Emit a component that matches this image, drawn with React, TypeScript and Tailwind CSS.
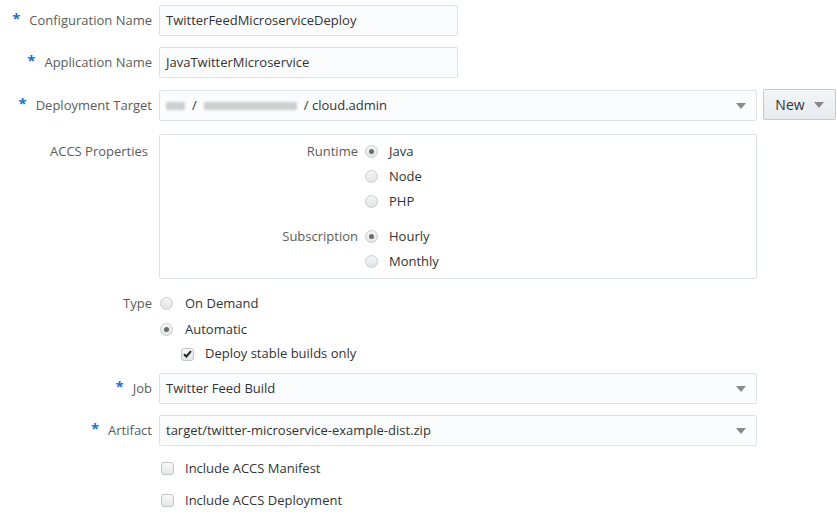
import React from 'react';

const font = { fontFamily: '"Open Sans", "Noto Sans", sans-serif' };

const Req = () => <span className="text-[#1f6fc5] text-[15px] font-bold mr-[9px] relative top-[-2px]">*</span>;

const Caret = () => (
  <svg width="10" height="6" viewBox="0 0 10 6" className="shrink-0">
    <path d="M0 0 L10 0 L5 6 Z" fill="#8a8a8a" />
  </svg>
);

const Radio = ({ checked }: { checked?: boolean }) => (
  <span className="w-[13px] h-[13px] rounded-full border border-[#c9cccf] bg-gradient-to-b from-[#f4f5f6] to-[#e2e4e6] flex items-center justify-center shrink-0">
    {checked && <span className="w-[5px] h-[5px] rounded-full bg-[#6b6b6b]" />}
  </span>
);

const Check = ({ checked }: { checked?: boolean }) => (
  <span className="w-[13px] h-[13px] rounded-[3px] border border-[#c2c5c8] bg-gradient-to-b from-[#f7f8f9] to-[#e4e6e8] flex items-center justify-center shrink-0">
    {checked && (
      <svg width="9" height="8" viewBox="0 0 9 8">
        <path d="M1 4.2 L3.4 6.5 L8 1.2" fill="none" stroke="#222" strokeWidth="2" />
      </svg>
    )}
  </span>
);

const Label = ({ req, children }: { req?: boolean; children: React.ReactNode }) => (
  <div className="w-[152px] shrink-0 flex items-center justify-end text-[#5c5c5c]">
    {req && <Req />}
    {children}
  </div>
);

const Field = ({ children, select, w }: { children: React.ReactNode; select?: boolean; w: string }) => (
  <div className={`${w} h-[31px] ml-[7px] border border-[#dde2e5] rounded-[2px] bg-[#fbfcfd] flex items-center pl-[6px] pr-[10px] text-[#333]`}>
    <div className="flex-1 flex items-center">{children}</div>
    {select && <Caret />}
  </div>
);

const Blur = ({ w }: { w: string }) => (
  <span className={`${w} h-[8px] bg-[#cfcfcf] inline-block blur-[1px] rounded-[1px]`} />
);

const OptRow = ({ label, text, checked }: { label: string; text: string; checked?: boolean }) => (
  <div className="flex items-center h-[25px]">
    <div className="w-[198px] text-right text-[#5c5c5c]">{label}</div>
    <div className="ml-[7px]"><Radio checked={checked} /></div>
    <div className="ml-[11px] text-[#333]">{text}</div>
  </div>
);

export default function App() {
  return (
    <div className="w-[837px] h-[515px] bg-white text-[13px] pt-[5px] overflow-hidden" style={font}>
      <div className="flex items-center h-[31px]">
        <Label req>Configuration Name</Label>
        <Field w="w-[299px]">TwitterFeedMicroserviceDeploy</Field>
      </div>
      <div className="flex items-center h-[31px] mt-[11px]">
        <Label req>Application Name</Label>
        <Field w="w-[299px]">JavaTwitterMicroservice</Field>
      </div>
      <div className="flex items-center h-[31px] mt-[12px]">
        <Label req>Deployment Target</Label>
        <Field w="w-[598px]" select>
          <span className="flex items-center gap-[7px]">
            <Blur w="w-[19px]" />
            <span>/</span>
            <Blur w="w-[93px]" />
            <span>/ cloud.admin</span>
          </span>
        </Field>
        <button className="ml-[6px] w-[73px] h-[31px] mt-[-2px] border border-[#c3ccd4] rounded-[2px] bg-gradient-to-b from-[#f4f6f8] to-[#e6eaee] flex items-center justify-center gap-[9px] text-[#333] text-[14px]">
          New <Caret />
        </button>
      </div>
      <div className="flex items-start mt-[13px]">
        <div className="w-[152px] shrink-0 pl-[50px] pt-[8px] text-[#5c5c5c]">ACCS Properties</div>
        <div className="ml-[7px] w-[598px] h-[145px] border border-[#dde2e5] rounded-[2px] pt-[4px]">
          <OptRow label="Runtime" text="Java" checked />
          <OptRow label="" text="Node" />
          <OptRow label="" text="PHP" />
          <div className="h-[10px]" />
          <OptRow label="Subscription" text="Hourly" checked />
          <OptRow label="" text="Monthly" />
        </div>
      </div>
      <div className="flex items-center h-[25px] mt-[12px]">
        <Label>Type</Label>
        <div className="ml-[8px]"><Radio /></div>
        <span className="ml-[12px] text-[#333]">On Demand</span>
      </div>
      <div className="flex items-center h-[25px] mt-[1px]">
        <div className="w-[160px] shrink-0" />
        <Radio checked />
        <span className="ml-[12px] text-[#333]">Automatic</span>
      </div>
      <div className="flex items-center h-[24px]">
        <div className="w-[181px] shrink-0" />
        <Check checked />
        <span className="ml-[11px] text-[#333]">Deploy stable builds only</span>
      </div>
      <div className="flex items-center h-[31px] mt-[7px]">
        <Label req>Job</Label>
        <Field w="w-[598px]" select>Twitter Feed Build</Field>
      </div>
      <div className="flex items-center h-[31px] mt-[11px]">
        <Label req>Artifact</Label>
        <Field w="w-[598px]" select>target/twitter-microservice-example-dist.zip</Field>
      </div>
      <div className="flex items-center h-[25px] mt-[10px]">
        <div className="w-[161px] shrink-0" />
        <Check />
        <span className="ml-[11px] text-[#333]">Include ACCS Manifest</span>
      </div>
      <div className="flex items-center h-[25px] mt-[7px]">
        <div className="w-[161px] shrink-0" />
        <Check />
        <span className="ml-[11px] text-[#333]">Include ACCS Deployment</span>
      </div>
    </div>
  );
}
